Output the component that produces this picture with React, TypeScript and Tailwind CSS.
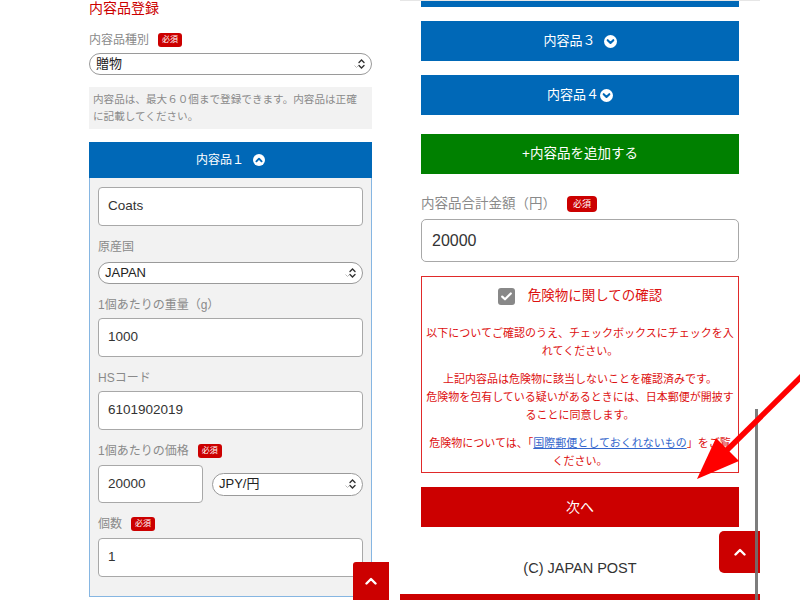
import React from 'react';

const Badge: React.FC<{ big?: boolean }> = ({ big }) => (
  <span
    className={
      big
        ? 'ml-[11px] inline-flex h-4 items-center rounded-[4px] bg-[#cc0000] px-[6px] text-[9px] leading-none text-white'
        : 'ml-[9px] inline-flex h-[14px] items-center rounded-[3px] bg-[#cc0000] px-1 text-[8px] leading-none text-white'
    }
  >
    必須
  </span>
);

const CircleChevron: React.FC<{ up?: boolean; size?: number }> = ({ up, size = 12 }) => (
  <svg width={size} height={size} viewBox="0 0 12 12">
    <circle cx="6" cy="6" r="6" fill="#fff" />
    <path
      d={up ? 'M3.4 7.3 L6 4.7 L8.6 7.3' : 'M3.4 4.8 L6 7.4 L8.6 4.8'}
      stroke="#0068b7"
      strokeWidth="1.9"
      fill="none"
      strokeLinecap="round"
      strokeLinejoin="round"
    />
  </svg>
);

const SelectArrows: React.FC = () => (
  <svg width="14" height="14" viewBox="0 0 14 14" className="shrink-0">
    <path d="M1.5 8.5 L3.5 10.5 L5 9" stroke="#bbb" strokeWidth="1" fill="none" />
    <path d="M6 5.5 L8.5 3 L11 5.5" stroke="#333" strokeWidth="1.4" fill="none" strokeLinecap="round" />
    <path d="M6 8.5 L8.5 11 L11 8.5" stroke="#333" strokeWidth="1.4" fill="none" strokeLinecap="round" />
  </svg>
);

const TopArrow: React.FC = () => (
  <svg width="12" height="8" viewBox="0 0 12 8">
    <path d="M1.5 6.5 L6 2 L10.5 6.5" stroke="#fff" strokeWidth="2.4" fill="none" strokeLinecap="round" strokeLinejoin="round" />
  </svg>
);

const Select: React.FC<{ value: string; className?: string }> = ({ value, className }) => (
  <div
    className={`flex items-center justify-between rounded-full border-[1.5px] border-[#9a9a9a] bg-white pl-[6px] pr-[4px] text-[13px] text-[#222] ${className}`}
  >
    <span>{value}</span>
    <SelectArrows />
  </div>
);

const Input: React.FC<{ value: string; className?: string }> = ({ value, className }) => (
  <div
    className={`flex items-center rounded-[4px] border-[1.5px] border-[#a8a8a8] bg-white px-[9px] text-[13.5px] text-[#333] ${className}`}
  >
    {value}
  </div>
);

const Label: React.FC<{ text: string; required?: boolean; className?: string }> = ({ text, required, className }) => (
  <div className={`flex h-5 items-center text-[12px] text-[#8a8a8a] ${className}`}>
    {text}
    {required && <Badge />}
  </div>
);

export default function App() {
  return (
    <div className="relative h-[600px] w-[800px] overflow-hidden bg-white font-['Liberation_Sans','Noto_Sans_CJK_JP',sans-serif]">
      <div className="flex">
        {/* left screen */}
        <div className="ml-[89px] w-[283px]">
          <h2 className="h-[14px] pt-[1px] text-[14px] leading-[15px] text-[#cc0000]">内容品登録</h2>
          <Label text="内容品種別" required className="mt-[16px]" />
          <Select value="贈物" className="mt-[3px] h-[22px]" />
          <div className="mt-[12px] whitespace-nowrap bg-[#f2f2f2] px-1 py-1 text-[10.6px] leading-[17px] text-[#8a8a8a]">
            内容品は、最大６０個まで登録できます。内容品は正確
            <br />
            に記載してください。
          </div>

          <div className="mt-[13px]">
            <div className="flex h-[36px] items-center justify-center gap-[9px] bg-[#0068b7] text-[12px] text-white">
              内容品１
              <CircleChevron up />
            </div>
            <div className="border-x border-b border-[#86b6e2] bg-[#f2f2f2] px-[8px] pb-[19px] pt-[9px]">
              <Input value="Coats" className="h-[39px]" />
              <Label text="原産国" className="mt-[11px]" />
              <Select value="JAPAN" className="mt-[5px] h-[22px]" />
              <Label text="1個あたりの重量（g）" className="mt-[11px]" />
              <Input value="1000" className="mt-[3px] h-[39px]" />
              <Label text="HSコード" className="mt-[11px]" />
              <Input value="6101902019" className="mt-[3px] h-[39px]" />
              <Label text="1個あたりの価格" required className="mt-[11px]" />
              <div className="mt-[4px] flex items-center gap-[9px]">
                <Input value="20000" className="h-[38px] w-[105px]" />
                <Select value="JPY/円" className="h-[23px] flex-1" />
              </div>
              <Label text="個数" required className="mt-[11px]" />
              <Input value="1" className="mt-[4px] h-[39px]" />
            </div>
          </div>
        </div>

        {/* right screen */}
        <div className="ml-[28px] w-[360px] border-t border-[#e6e6e6]">
          <div className="px-[21px]">
            <div className="h-[6px] bg-[#0068b7]" />
            <div className="mt-[14px] flex h-[40px] items-center justify-center gap-[8px] bg-[#0068b7] text-[13px] text-white">
              内容品３
              <CircleChevron size={13} />
            </div>
            <div className="mt-[14px] flex h-[40px] items-center justify-center gap-[1px] bg-[#0068b7] text-[13px] text-white">
              内容品４
              <CircleChevron size={13} />
            </div>
            <div className="mt-[19px] flex h-[40px] items-center justify-center bg-[#008000] text-[13.5px] text-white">
              +内容品を追加する
            </div>

            <div className="mt-[20px] flex h-5 items-center text-[13.5px] text-[#8a8a8a]">
              内容品合計金額（円）
              <Badge big />
            </div>
            <div className="mt-[5px] flex h-[43px] items-center rounded-[5px] border-[1.5px] border-[#a8a8a8] bg-white px-[10px] text-[16px] text-[#333]">
              20000
            </div>

            <div className="mt-[14px] border border-[#e02a2a] px-1 pb-[2px] pt-[9px] text-center text-[#dd1111]">
              <div className="flex h-5 items-center justify-center gap-[13px] text-[13.5px]">
                <span className="flex h-[17px] w-[17px] items-center justify-center rounded-[3px] bg-[#888]">
                  <svg width="11" height="9" viewBox="0 0 11 9">
                    <path d="M1.2 4.6 L4 7.3 L9.8 1.5" stroke="#fff" strokeWidth="2.2" fill="none" strokeLinecap="round" strokeLinejoin="round" />
                  </svg>
                </span>
                危険物に関しての確認
              </div>
              <p className="mt-[18px] whitespace-nowrap text-[11px] leading-[18px]">
                以下についてご確認のうえ、チェックボックスにチェックを入
                <br />
                れてください。
              </p>
              <p className="mt-[10px] whitespace-nowrap text-[11px] leading-[18px]">
                上記内容品は危険物に該当しないことを確認済みです。
                <br />
                危険物を包有している疑いがあるときには、日本郵便が開披す
                <br />
                ることに同意します。
              </p>
              <p className="mt-[10px] whitespace-nowrap text-[11px] leading-[18px]">
                危険物については、「<span className="text-[#3366cc] underline">国際郵便としておくれないもの</span>」をご覧
                <br />
                ください。
              </p>
            </div>

            <div className="mt-[14px] flex h-[40px] items-center justify-center bg-[#cc0000] text-[14px] text-white">
              次へ
            </div>
            <div className="mt-[32px] flex h-5 items-center justify-center text-[14.5px] text-[#333]">
              (C) JAPAN POST
            </div>
          </div>
          <div className="mt-[15px] h-[6px] bg-[#cc0000]" />
        </div>
      </div>

      {/* page-top buttons */}
      <div className="absolute left-[353px] top-[562px] flex h-[38px] w-[36px] items-center justify-center rounded-tl-[3px] bg-[#cc0000]">
        <TopArrow />
      </div>
      <div className="absolute left-[719px] top-[531px] flex h-[42px] w-[41px] items-center justify-center rounded-l-[5px] bg-[#cc0000]">
        <TopArrow />
      </div>

      {/* scroll indicator */}
      <div className="absolute left-[755px] top-[409px] h-[191px] w-[3px] bg-[#6f6f6f]/90" />

      {/* annotation arrow */}
      <svg className="pointer-events-none absolute left-0 top-0" width="800" height="600" viewBox="0 0 800 600">
        <line x1="802" y1="376" x2="722" y2="455" stroke="#ff0000" strokeWidth="5.5" />
        <polygon points="697,479 716,438 739,461" fill="#ff0000" />
      </svg>
    </div>
  );
}
